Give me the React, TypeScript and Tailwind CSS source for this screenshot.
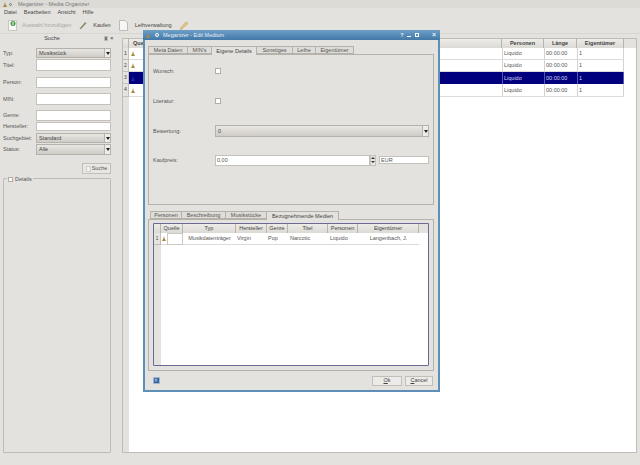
import React from "react";

const Arrow = () => <span className="block w-0 h-0 border-l-[2px] border-r-[2px] border-t-[3px] border-l-transparent border-r-transparent border-t-[#222]" />;

const Combo = ({ t, cls }: { t: string; cls: string }) => (
  <div className={`flex items-center border border-[#b5b2ac] bg-gradient-to-b from-[#e9e7e3] to-[#cfccc6] text-[5.5px] text-[#444] ${cls}`}>
    <span className="flex-1 pl-[2px]">{t}</span>
    <span className="w-[6px] h-full flex items-center justify-center bg-[#eeece8] border-l border-[#b5b2ac]"><Arrow /></span>
  </div>
);

const Field = ({ label, combo, h, mt }: { label: string; combo?: string; h: string; mt: string }) => (
  <div className={`flex items-center ${mt}`}>
    <span className="w-[33px] text-[5.5px] text-[#555] whitespace-nowrap">{label}</span>
    {combo ? <Combo t={combo} cls={`w-[75px] ${h}`} /> : <div className={`w-[75px] ${h} bg-white border border-[#c4c1bb]`} />}
  </div>
);

const Lamp = ({ dark }: { dark?: boolean }) => (
  <svg className="block" width="4" height="5" viewBox="0 0 5 7">
    <path d="M2.5 0 L3.5 4 L5 6 L5 7 L0 7 L0 6 L1.5 4 Z" fill={dark ? "#27278f" : "#a88a3c"} />
  </svg>
);

const Th = ({ t, cls }: { t: string; cls: string }) => (
  <div className={`h-full flex items-center justify-center border-r border-[#b8b5af] bg-gradient-to-b from-[#eeece8] to-[#dcdad5] ${cls}`}>{t}</div>
);

const Row = ({ n, sel, h }: { n: number; sel?: boolean; h: string }) => {
  const line = sel ? "border-[#5555b0]" : "border-[#d5d3cf]";
  return (
    <div className={`flex ${h}`}>
      <div className="w-[6px] flex items-center justify-center bg-[#e6e4e0] border-r border-b border-[#c2bfb9] text-[5px] text-[#444]">{n}</div>
      <div className={`w-[495px] flex items-center text-[5.5px] ${sel ? "bg-[#00007f] text-[#d8d8f0]" : "bg-white text-[#555] border-b border-[#dddbd7]"}`}>
        <span className="pl-[2px] w-[373px]"><Lamp dark={sel} /></span>
        <span className={`w-[42px] h-full flex items-center pl-[1px] border-l ${line}`}>Liquido</span>
        <span className={`w-[33px] h-full flex items-center pl-[1px] border-l ${line}`}>00:00:00</span>
        <span className={`w-[47px] h-full flex items-center pl-[1px] border-l border-r ${line}`}>1</span>
      </div>
    </div>
  );
};

const Tab = ({ t, w, active }: { t: string; w: string; active?: boolean }) => (
  <div className={`flex items-center justify-center border border-[#b5b2ac] border-l-0 first:border-l ${w} ${active ? "h-[9px] bg-[#e4e2de] border-b-0 text-[#444] relative top-[1px]" : "h-[8px] bg-[#dfddd8] text-[#555]"}`}>{t}</div>
);

const DRow = ({ label, children, h }: { label: string; children?: React.ReactNode; h: string }) => (
  <div className={`flex items-center ${h}`}>
    <span className="w-[62px] text-[5.5px] text-[#555]">{label}</span>
    {children}
  </div>
);

const Check = ({ s = "w-[6px] h-[6px]" }: { s?: string }) => <div className={`${s} bg-white border border-[#b0ada7]`} />;

export default function App() {
  return (
    <div className="relative w-[640px] h-[465px] overflow-hidden bg-[#e4e2de] flex flex-col font-['Liberation_Sans',sans-serif]">
      <div className="h-[8px] flex items-center pl-[3px] bg-[#dddbd6] text-[5.5px] text-[#777]">
        <Lamp />
        <span className="ml-[2px] w-[3px] h-[3px] rounded-full border border-[#777]" />
        <span className="ml-[6px]">Meganizer - Media Organizer</span>
      </div>
      <div className="h-[9px] flex items-center pl-[4px] gap-[7px] text-[5.5px] text-[#444]">
        <span>Datei</span><span>Bearbeiten</span><span>Ansicht</span><span>Hilfe</span>
      </div>
      <div className="h-[17px] flex items-center pl-[8px] text-[5.5px] text-[#444] border-b border-[#d8d6d1]">
        <svg width="9" height="11" viewBox="0 0 9 11"><rect x="0.5" y="0.5" width="8" height="10" fill="#f7f7f4" stroke="#c8c8c0" /><circle cx="5" cy="3.5" r="2.5" fill="#4a9a4a" /><rect x="4.5" y="2" width="1" height="3" fill="#fff" /></svg>
        <span className="ml-[5px] text-[#a8a6a2]">Auswahl hinzufügen</span>
        <svg className="ml-[8px]" width="8" height="10" viewBox="0 0 9 10"><path d="M1 9 L7 2 L8 3 L2 9.5 Z" fill="#8a9a4a" stroke="#666" strokeWidth="0.4" /></svg>
        <span className="ml-[6px]">Kaufen</span>
        <svg className="ml-[8px]" width="9" height="11" viewBox="0 0 9 11"><path d="M0.5 0.5 H6 L8.5 3 V10.5 H0.5 Z" fill="#f7f7f4" stroke="#bbb" /></svg>
        <span className="ml-[7px]">Leihverwaltung</span>
        <svg className="ml-[7px]" width="10" height="10" viewBox="0 0 10 10"><path d="M1 9 L7 2 L9 3.5 L2 9.5 Z" fill="#e8cf80" stroke="#a88a3c" strokeWidth="0.5" /></svg>
      </div>

      <div className="flex-1 flex min-h-0">
        <aside className="w-[122px] shrink-0 pl-[3px] flex flex-col">
          <div className="h-[9px] flex items-center text-[5.5px] text-[#444]">
            <span className="w-[98px] text-center">Suche</span>
            <span className="ml-[3px] w-[4px] h-[5px] bg-[#777] border border-[#bbb]" />
            <span className="ml-[2px] w-[5px] h-[5px] text-[6px] leading-[5px] text-[#333]">×</span>
          </div>
          <Field label="Typ:" combo="Musikstück" h="h-[10px]" mt="mt-[5px]" />
          <Field label="Titel:" h="h-[12px]" mt="mt-[1px]" />
          <Field label="Person:" h="h-[11px]" mt="mt-[6px]" />
          <Field label="MIN:" h="h-[12px]" mt="mt-[5px]" />
          <Field label="Genre:" h="h-[11px]" mt="mt-[5px]" />
          <Field label="Hersteller:" h="h-[9px]" mt="mt-[1px]" />
          <Field label="Suchgebiet:" combo="Standard" h="h-[10px]" mt="mt-[2px]" />
          <Field label="Status:" combo="Alle" h="h-[11px]" mt="mt-[1px]" />
          <div className="w-[108px] flex justify-end mt-[8px]">
            <div className="h-[11px] w-[29px] flex items-center justify-center gap-[1px] border border-[#c2bfb9] bg-[#e9e7e3] text-[5.5px] text-[#555]">
              <span className="w-[5px] h-[6px] bg-[#f2f2ee] border border-[#cfcfc8]" />Suche
            </div>
          </div>
          <div className="relative mt-[4px] w-[108px] flex-1 mb-[12px] border border-[#bfbcb6] rounded-[1px]">
            <div className="absolute -top-[4px] left-[3px] px-[1px] flex items-center gap-[2px] bg-[#e4e2de] text-[5.5px] text-[#555]">
              <Check s="w-[5px] h-[5px]" /><span>Details</span>
            </div>
          </div>
        </aside>

        <main className="w-[515px] shrink-0 mt-[4px] mb-[12px] border border-[#bfbcb6] bg-white flex flex-col">
          <div className="flex h-[9px] text-[5.5px] font-bold text-[#444] bg-[#e4e2de]">
            <Th t="" cls="w-[6px]" />
            <Th t="Quelle" cls="w-[373px] !justify-start pl-[4px]" />
            <Th t="Personen" cls="w-[42px]" />
            <Th t="Länge" cls="w-[33px]" />
            <Th t="Eigentümer" cls="w-[47px]" />
            <div className="flex-1" />
          </div>
          <Row n={1} h="h-[12px]" /><Row n={2} h="h-[12px]" /><Row n={3} sel h="h-[12px]" /><Row n={4} h="h-[13px]" />
          <div className="flex-1 flex">
            <div className="w-[6px] bg-[#e4e2de]" />
          </div>
        </main>
      </div>

      {/* dialog window over the main window */}
      <div className="absolute left-[143px] top-[30px] w-[297px] h-[362px] flex flex-col bg-[#e4e2de] border-x-[2px] border-b-[2px] border-[#5e8fb8]">
        <div className="h-[10px] -mx-[2px] flex items-center pl-[3px] bg-gradient-to-b from-[#6d9fc8] to-[#4379a8] text-[5.5px] text-[#e6eef5]">
          <Lamp />
          <span className="ml-[5px] w-[4px] h-[4px] rounded-full border border-white" />
          <span className="ml-[4px] flex-1">Meganizer - Edit Medium</span>
          <span className="w-[4px] text-center font-bold">?</span>
          <span className="ml-[3px] w-[4px] h-[4px] border-b border-white" />
          <span className="ml-[4px] w-[4px] h-[4px] border border-white" />
          <span className="ml-[12px] mr-[3px] w-[6px] text-center font-bold text-[7px] leading-[6px]">×</span>
        </div>
        <div className="pl-[3px] pr-[4px] pt-[6px] flex-1 flex flex-col min-h-0">
          <div className="flex items-end text-[5.5px] h-[8px] relative">
            <Tab t="Meta Daten" w="w-[40px]" />
            <Tab t="MIN's" w="w-[24px]" />
            <Tab t="Eigene Details" w="w-[45px]" active />
            <Tab t="Sonstiges" w="w-[36px]" />
            <Tab t="Leihe" w="w-[23px]" />
            <Tab t="Eigentümer" w="w-[38px]" />
          </div>
          <div className="h-[151px] pl-[4px] pr-[4px] border border-[#b5b2ac] flex flex-col">
            <DRow label="Wunsch:" h="h-[32px]"><Check /></DRow>
            <DRow label="Literatur:" h="h-[28px]"><Check /></DRow>
            <DRow label="Bewertung:" h="h-[32px]"><Combo t="0" cls="flex-1 h-[12px]" /></DRow>
            <DRow label="Kaufpreis:" h="h-[26px]">
              <div className="flex-1 flex items-center">
                <div className="flex-1 h-[11px] bg-white border border-[#c4c1bb] pl-[1px] flex items-center text-[5.5px] text-[#555]">0,00</div>
                <div className="w-[6px] h-[11px] mr-[3px] flex flex-col items-center justify-around bg-[#e9e7e3] border border-[#c4c1bb]">
                  <span className="w-0 h-0 border-l-[2px] border-r-[2px] border-b-[2px] border-l-transparent border-r-transparent border-b-[#333]" />
                  <span className="w-0 h-0 border-l-[2px] border-r-[2px] border-t-[2px] border-l-transparent border-r-transparent border-t-[#333]" />
                </div>
                <div className="w-[50px] h-[8px] bg-white border border-[#c4c1bb] pl-[1px] flex items-center text-[5.5px] text-[#555]">EUR</div>
              </div>
            </DRow>
          </div>
          <div className="flex items-end text-[5.5px] h-[8px] mt-[6px] pl-[2px] relative">
            <Tab t="Personen" w="w-[32px]" />
            <Tab t="Beschreibung" w="w-[44px]" />
            <Tab t="Musikstücke" w="w-[41px]" />
            <Tab t="Bezugnehmende Medien" w="w-[72px]" active />
          </div>
          <div className="h-[152px] border border-[#b5b2ac] pt-[3px] pb-[4px] px-[4px]">
            <div className="h-full flex flex-col bg-white border border-[#6c6a94] rounded-b-[1px]">
              <div className="flex h-[9px] text-[5.5px] text-[#444] bg-[#e4e2de]">
                <Th t="" cls="w-[7px]" />
                <Th t="Quelle" cls="w-[22px]" />
                <Th t="Typ" cls="w-[53px]" />
                <Th t="Hersteller" cls="w-[31px]" />
                <Th t="Genre" cls="w-[21px]" />
                <Th t="Titel" cls="w-[40px]" />
                <Th t="Personen" cls="w-[30px]" />
                <Th t="Eigentümer" cls="w-[61px]" />
                <div className="flex-1" />
              </div>
              <div className="flex h-[12px] text-[5.5px] text-[#555]">
                <div className="w-[7px] flex items-center justify-center bg-[#e6e4e0] border-r border-b border-[#c2bfb9]">1</div>
                <div className="w-[6px] flex items-center justify-center border-b border-[#dddbd7]"><Lamp /></div>
                <div className="w-[16px] border border-[#c9c7c2]" />
                <div className="w-[53px] flex items-center justify-center border-b border-[#dddbd7]">Musikdatenträger</div>
                <div className="w-[31px] flex items-center pl-[1px] border-b border-[#dddbd7]">Virgin</div>
                <div className="w-[21px] flex items-center pl-[1px] border-b border-[#dddbd7]">Pop</div>
                <div className="w-[40px] flex items-center pl-[2px] border-b border-[#dddbd7]">Narcotic</div>
                <div className="w-[30px] flex items-center pl-[2px] border-b border-[#dddbd7]">Liquido</div>
                <div className="w-[61px] flex items-center justify-center border-b border-[#dddbd7]">Langenbach, J.</div>
              </div>
              <div className="flex-1 flex min-h-0">
                <div className="w-[7px] bg-[#e4e2de]" />
              </div>
            </div>
          </div>
          <div className="flex-1 flex items-center pl-[5px] pr-[1px]">
            <svg width="7" height="7" viewBox="0 0 8 8"><rect x="0.5" y="0.5" width="7" height="7" fill="#2f5f9f" stroke="#a9bcd2" /><rect x="2" y="2" width="3" height="1" fill="#cfdcec" /><rect x="2" y="4" width="3" height="1" fill="#cfdcec" /></svg>
            <div className="flex-1" />
            <div className="w-[30px] h-[10px] mr-[3px] flex items-center justify-center border border-[#c2bfb9] bg-[#ecebe7] text-[5.5px] text-[#444]"><span className="underline">O</span>k</div>
            <div className="w-[28px] h-[10px] flex items-center justify-center border border-[#c2bfb9] bg-[#ecebe7] text-[5.5px] text-[#444]"><span className="underline">C</span>ancel</div>
          </div>
        </div>
      </div>
    </div>
  );
}
